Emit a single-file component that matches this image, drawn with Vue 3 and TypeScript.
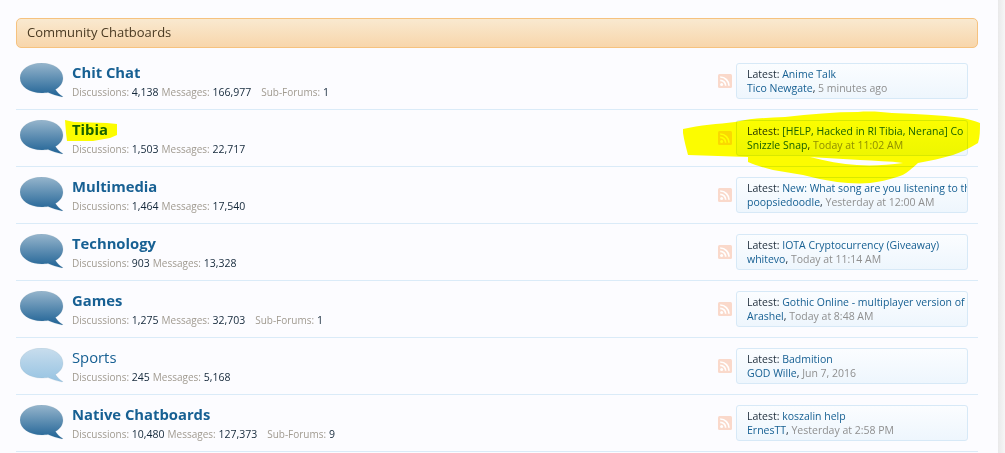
<script setup lang="ts">
interface Forum {
  title: string
  discussions: string
  messages: string
  subForums?: string
  latest: string
  user: string
  date: string
  read?: boolean
}

const forums: Forum[] = [
  { title: 'Chit Chat', discussions: '4,138', messages: '166,977', subForums: '1', latest: 'Anime Talk', user: 'Tico Newgate', date: '5 minutes ago' },
  { title: 'Tibia', discussions: '1,503', messages: '22,717', latest: '[HELP, Hacked in Rl Tibia, Nerana] Co', user: 'Snizzle Snap', date: 'Today at 11:02 AM' },
  { title: 'Multimedia', discussions: '1,464', messages: '17,540', latest: 'New: What song are you listening to th', user: 'poopsiedoodle', date: 'Yesterday at 12:00 AM' },
  { title: 'Technology', discussions: '903', messages: '13,328', latest: 'IOTA Cryptocurrency (Giveaway)', user: 'whitevo', date: 'Today at 11:14 AM' },
  { title: 'Games', discussions: '1,275', messages: '32,703', subForums: '1', latest: 'Gothic Online - multiplayer version of', user: 'Arashel', date: 'Today at 8:48 AM' },
  { title: 'Sports', discussions: '245', messages: '5,168', latest: 'Badmition', user: 'GOD Wille', date: 'Jun 7, 2016', read: true },
  { title: 'Native Chatboards', discussions: '10,480', messages: '127,373', subForums: '9', latest: 'koszalin help', user: 'ErnesTT', date: 'Yesterday at 2:58 PM' }
]
</script>

<template>
  <div class="page">
    <main class="content">
      <h2 class="category">Community Chatboards</h2>
      <ol class="list">
        <li v-for="f in forums" :key="f.title" class="row">
          <svg class="bubble" viewBox="0 0 44 35" width="44" height="35">
            <defs>
              <linearGradient :id="'g' + f.title.length" x1="0" y1="0" x2="0" y2="1">
                <stop offset="0" :stop-color="f.read ? '#c8dded' : '#96b5cc'" />
                <stop offset="1" :stop-color="f.read ? '#96c3e2' : '#1f6295'" />
              </linearGradient>
            </defs>
            <path d="M21.500 0C33.500 0 43 6.500 43 15 43 20 40 24 35.500 26.500 37 29 39.500 31.500 42.800 33.500L42.300 34C37 33 32 31.500 28 29.600 26 30 23.500 30 21.500 30 9.500 30 0 23.500 0 15 0 6.500 9.500 0 21.500 0Z" :fill="'url(#g' + f.title.length + ')'" stroke="#7d97aa" stroke-opacity=".3" stroke-width=".5" />
          </svg>
          <div class="info">
            <h3 class="title" :class="{ read: f.read }">{{ f.title }}</h3>
            <div class="stats">
              <span class="stat"><span class="label">Discussions:</span> {{ f.discussions }}</span>
              <span class="stat"><span class="label">Messages:</span> {{ f.messages }}</span>
              <span v-if="f.subForums" class="stat sub"><span class="label">Sub-Forums:</span> {{ f.subForums }}</span>
            </div>
          </div>
          <svg class="rss" viewBox="0 0 14 14" width="14" height="14">
            <rect width="14" height="14" rx="1.500" fill="#fad9cb" />
            <circle cx="3.600" cy="10.400" r="1.500" fill="#fff" />
            <path d="M2.200 6.300a5.500 5.500 0 0 1 5.500 5.500M2.200 3a8.800 8.800 0 0 1 8.800 8.800" fill="none" stroke="#fff" stroke-width="1.700" />
          </svg>
          <div class="latest">
            <div class="line"><span class="dark">Latest:</span> <a class="link">{{ f.latest }}</a></div>
            <div class="line"><a class="link">{{ f.user }}</a><span class="dark">,</span> <span class="date">{{ f.date }}</span></div>
          </div>
        </li>
      </ol>
    </main>
    <svg class="marker" viewBox="0 0 1005 453" width="1005" height="453">
      <path d="M65 120 L74 122 L107 123 L117 124 L117 135 L110 138 L93 141 L67 141 L66 133 Z" fill="#ffff00" />
      <path fill-rule="evenodd" fill="#ffff00" d="M683 129 C700 125 718 124 735 122 C752 118 768 118 785 117 C810 114 835 112 858 112 C870 111 882 112 892 113 C915 114 940 115 963 118 C970 120 976 121 980 123 C980 130 980 137 978 143 C970 148 962 152 953 155 C942 158 930 161 918 163 C915 166 912 168 910 170 C905 174 901 176 897 177 C888 180 879 182 870 183 C858 184 847 183 837 182 C825 180 814 178 803 175 C793 173 783 172 773 170 C764 168 755 165 748 162 L748 157 C728 156 708 156 688 155 C686 147 684 140 683 133 Z M810 157 C825 161 842 164 857 165 C872 166 888 165 903 163 C890 161 875 161 860 160 C843 159 826 158 810 157 Z" />
    </svg>
  </div>
</template>

<style>
body { background: #fcfcff; }
</style>

<style scoped>
.page {
  position: relative;
  width: 1005px;
  height: 453px;
  overflow: hidden;
  box-sizing: border-box;
  padding: 18px 27px 0 16px;
  background: linear-gradient(90deg, #fcfcff 998px, #e9e9ea 998px, #f6f6f6 1005px);
  font-family: "Open Sans", "Noto Sans", sans-serif;
}
.content { width: 962px; }
.category {
  margin: 0;
  height: 30px;
  box-sizing: border-box;
  padding: 0 10px 2px;
  display: flex;
  align-items: center;
  border: 1px solid #f6c27f;
  border-radius: 5px;
  background: linear-gradient(#f9e9d0, #f8d6ab);
  color: #4a3a22;
  font-size: 13px;
  font-weight: 400;
}
.list { list-style: none; margin: 5px 0 0; padding: 0; }
.row {
  height: 57px;
  box-sizing: border-box;
  border-bottom: 1px solid #daebf8;
  display: flex;
  align-items: flex-start;
  padding: 10px 10px 0 4px;
}
.bubble { flex: none; }
.info { flex: 1; margin-left: 8px; min-width: 0; }
.title {
  margin: -1px 0 0;
  color: #176093;
  font-size: 14.800px;
  line-height: 20px;
  font-weight: 700;
}
.title.read { font-weight: 400; }
.stats {
  margin-top: 3px;
  display: flex;
  gap: 3px;
  font-size: 10.500px;
  line-height: 14px;
  color: #14283a;
}
.stat.sub { margin-left: 7px; }
.label { color: #a09a90; font-size: 10px; }
.rss { flex: none; margin: 11px 4px 0 0; }
.latest {
  flex: none;
  width: 232px;
  height: 36px;
  box-sizing: border-box;
  padding: 3px 0 0 10px;
  overflow: hidden;
  border: 1px solid #d7e9f7;
  border-radius: 3px;
  background: linear-gradient(#fbfdff, #eef6fd);
  font-size: 10.500px;
  line-height: 14.300px;
}
.line { white-space: nowrap; overflow: hidden; }
.dark { color: #1d2c3a; }
.link { color: #176093; }
.date { color: #8f8f8f; }
.marker {
  position: absolute;
  left: 0;
  top: 0;
  mix-blend-mode: multiply;
  pointer-events: none;
}
</style>
